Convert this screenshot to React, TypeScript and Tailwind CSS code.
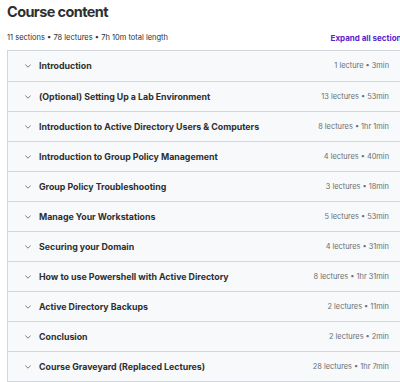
const sections = [
  { title: "Introduction", meta: "1 lecture • 3min" },
  { title: "(Optional) Setting Up a Lab Environment", meta: "13 lectures • 53min" },
  { title: "Introduction to Active Directory Users & Computers", meta: "8 lectures • 1hr 1min" },
  { title: "Introduction to Group Policy Management", meta: "4 lectures • 40min" },
  { title: "Group Policy Troubleshooting", meta: "3 lectures • 18min" },
  { title: "Manage Your Workstations", meta: "5 lectures • 53min" },
  { title: "Securing your Domain", meta: "4 lectures • 31min" },
  { title: "How to use Powershell with Active Directory", meta: "8 lectures • 1hr 31min" },
  { title: "Active Directory Backups", meta: "2 lectures • 11min" },
  { title: "Conclusion", meta: "2 lectures • 2min" },
  { title: "Course Graveyard (Replaced Lectures)", meta: "28 lectures • 1hr 7min" },
];

function Chevron() {
  return (
    <svg width="6" height="4" viewBox="0 0 6 4" fill="none" className="shrink-0">
      <path d="M0.6 0.8 L3 3.2 L5.4 0.8" stroke="#6a6f73" strokeWidth="0.9" strokeLinecap="round" strokeLinejoin="round" />
    </svg>
  );
}

export default function App() {
  return (
    <div className="w-[400px] h-[382px] overflow-hidden bg-white text-[#2d2f31] font-['Inter',sans-serif]">
      <div className="w-[406px] pl-[7px]">
        <h2 className="text-[14.5px] font-bold leading-[20px] pt-[2px] tracking-[-0.6px]">Course content</h2>
        <div className="flex items-center justify-between mt-[10px] mb-[6px] h-[12px]">
          <span className="text-[7.5px]">11 sections • 78 lectures • 7h 10m total length</span>
          <span className="text-[8px] font-bold text-[#5624d0] whitespace-nowrap">Expand all sections</span>
        </div>
        <div className="border border-[#d1d7dc] border-r-0">
          {sections.map((s, i) => (
            <div
              key={i}
              className={`flex items-center h-[30px] bg-[#f7f9fa] pl-[17px] pr-[17px] ${i > 0 ? "border-t border-[#d1d7dc]" : ""}`}
            >
              <Chevron />
              <span className="ml-[8px] text-[8.8px] font-bold flex-1">{s.title}</span>
              <span className="text-[7.4px] text-[#6a6f73]">{s.meta}</span>
            </div>
          ))}
        </div>
      </div>
    </div>
  );
}
